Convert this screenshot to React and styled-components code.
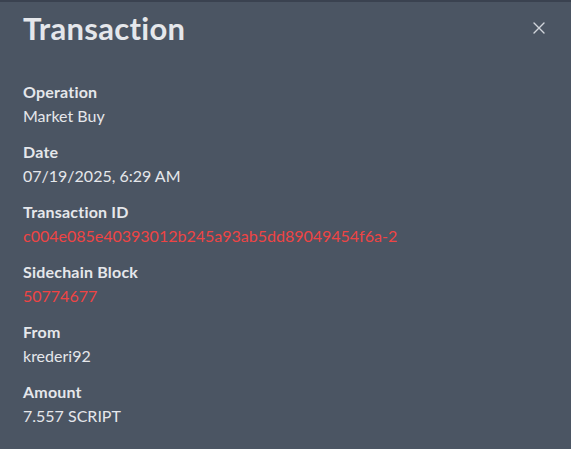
import styled, { createGlobalStyle } from "styled-components";

const GlobalStyle = createGlobalStyle`
    html, body {
        margin: 0;
        padding: 0;
        background-color: #4b5563;
    }
    * {
        box-sizing: border-box;
    }
`;

const fields = [
    { label: "Operation", value: "Market Buy" },
    { label: "Date", value: "07/19/2025, 6:29 AM" },
    { label: "Transaction ID", value: "c004e085e40393012b245a93ab5dd89049454f6a-2", link: true },
    { label: "Sidechain Block", value: "50774677", link: true },
    { label: "From", value: "krederi92" },
    { label: "Amount", value: "7.557 SCRIPT" },
];

export default function App() {
    return (
        <>
            <GlobalStyle />
            <Modal>
                <Header>
                    <Title>Transaction</Title>
                    <CloseButton aria-label="Close">
                        <svg width="12" height="12" viewBox="0 0 12 12">
                            <path d="M1 1L11 11M11 1L1 11" stroke="#d1d5db" strokeWidth="1.4" strokeLinecap="round" />
                        </svg>
                    </CloseButton>
                </Header>
                <Fields>
                    {fields.map((f) => (
                        <Field key={f.label}>
                            <Label>{f.label}</Label>
                            <Value $link={f.link}>{f.value}</Value>
                        </Field>
                    ))}
                </Fields>
            </Modal>
        </>
    );
}

const Modal = styled.div`
    width: 571px;
    height: 449px;
    background-color: #4b5563;
    border-top: 2px solid #3a4250;
    font-family: "Lato", "Noto Sans", sans-serif;
    color: #e5e7eb;
    padding: 0 23px;
`;

const Header = styled.div`
    display: flex;
    justify-content: space-between;
    align-items: center;
    height: 52px;
`;

const Title = styled.h1`
    margin: 0;
    font-size: 31px;
    font-weight: 700;
    color: #e5e7eb;
    letter-spacing: 0.3px;
`;

const CloseButton = styled.button`
    background: none;
    border: none;
    padding: 0;
    margin-right: 3px;
    display: flex;
    cursor: pointer;
`;

const Fields = styled.div`
    display: flex;
    flex-direction: column;
    gap: 16px;
    padding-top: 28px;
`;

const Field = styled.div`
    display: flex;
    flex-direction: column;
    gap: 4px;
`;

const Label = styled.div`
    font-size: 16px;
    font-weight: 700;
    line-height: 20px;
    letter-spacing: 0.2px;
    color: #e5e7eb;
`;

const Value = styled.div`
    font-size: 16px;
    line-height: 20px;
    color: ${(p) => (p.$link ? "#ef4444" : "#e5e7eb")};
`;
